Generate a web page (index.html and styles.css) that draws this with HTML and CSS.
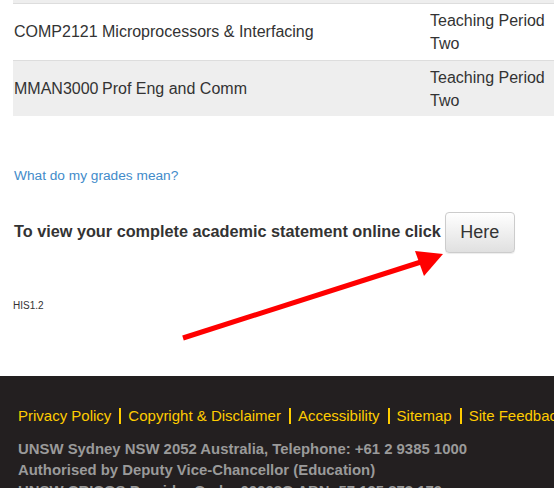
FILE: index.html
```html
<!DOCTYPE html>
<html>
<head>
<meta charset="utf-8">
<link rel="stylesheet" href="styles.css">
</head>
<body>
<div class="page">
  <table class="results">
    <colgroup><col class="c-code"><col class="c-name"><col class="c-period"></colgroup>
    <tr class="stub"><td></td><td></td><td></td></tr>
    <tr class="odd">
      <td>COMP2121</td><td>Microprocessors &amp; Interfacing</td><td>Teaching Period Two</td>
    </tr>
    <tr class="even">
      <td>MMAN3000</td><td>Prof Eng and Comm</td><td>Teaching Period Two</td>
    </tr>
  </table>

  <a class="grades" href="#">What do my grades mean?</a>

  <div class="statement">
    <span class="statement-text">To view your complete academic statement online click</span>
    <button class="btn">Here</button>
  </div>

  <div class="version">HIS1.2</div>

  <svg class="arrow" width="554" height="488" viewBox="0 0 554 488">
    <line x1="183" y1="338" x2="424" y2="261" stroke="#ff0000" stroke-width="5"/>
    <polygon points="443,254 415,251 424,276" fill="#ff0000"/>
  </svg>
</div>

<footer class="footer">
  <nav class="footer-links">
    <a href="#">Privacy Policy</a><span class="sep"></span>
    <a href="#">Copyright &amp; Disclaimer</a><span class="sep"></span>
    <a href="#">Accessibility</a><span class="sep"></span>
    <a href="#">Sitemap</a><span class="sep"></span>
    <a href="#">Site Feedback</a>
  </nav>
  <p class="footer-info">UNSW Sydney NSW 2052 Australia, Telephone: +61 2 9385 1000<br>
  Authorised by Deputy Vice-Chancellor (Education)<br>
  UNSW CRICOS Provider Code: 00098G ABN: 57 195 873 179</p>
</footer>
</body>
</html>
```

FILE: styles.css
```css
html, body {
  margin: 0;
  padding: 0;
  overflow: hidden;
}
body {
  font-family: "Liberation Sans", Arial, Helvetica, sans-serif;
  color: #333333;
  background: #ffffff;
}
.page {
  position: relative;
  padding: 0 0 0 13px;
  height: 376px;
  box-sizing: border-box;
}
.results {
  width: 560px;
  border-collapse: collapse;
  table-layout: fixed;
  font-size: 16px;
  line-height: 22.86px;
}
.c-code { width: 88px; }
.c-name { width: 328px; }
.c-period { width: 144px; }
.results td {
  padding: 6px 1px 4px 1px;
  vertical-align: middle;
  border-top: 1px solid #dddddd;
}
.results td:nth-child(3) { padding-right: 24px; }
.results .stub td {
  height: 3px;
  padding: 0;
  border-top: none;
  background: #eeeeee;
}
.results .odd td { background: #ffffff; }
.results .even td { background: #eeeeee; }
.grades {
  display: block;
  margin: 51px 0 0 1px;
  font-size: 13.7px;
  line-height: 18px;
  color: #428bca;
  text-decoration: none;
}
.statement {
  display: flex;
  align-items: center;
  margin: 27px 0 0 1px;
}
.statement-text {
  font-weight: bold;
  font-size: 16.25px;
  margin-bottom: 3px;
}
.btn {
  margin-left: 4px;
  width: 70px;
  height: 41px;
  padding: 0;
  font-family: "Liberation Sans", Arial, sans-serif;
  font-size: 18px;
  color: #333333;
  border: 1px solid #cccccc;
  border-radius: 4px;
  background: linear-gradient(#ffffff, #e0e0e0);
  box-shadow: inset 0 1px 0 rgba(255,255,255,0.15), 0 1px 1px rgba(0,0,0,0.075);
}
.version {
  margin: 47px 0 0 0;
  font-size: 10px;
  line-height: 12px;
}
.arrow {
  position: absolute;
  left: 0;
  top: 0;
  pointer-events: none;
}
.footer {
  background: #231f20;
  padding: 30px 0 0 18px;
  white-space: nowrap;
}
.footer-links {
  display: flex;
  align-items: center;
  font-size: 15px;
  line-height: 20px;
}
.footer-links > * {
  flex-shrink: 0;
}
.footer-links a {
  color: #ffcc00;
  text-decoration: none;
}
.sep {
  display: inline-block;
  width: 2px;
  height: 16px;
  background: #ffcc00;
  margin: 0 7px 0 8px;
}
.footer-info {
  margin: 13px 0 0 0;
  font-size: 14.9px;
  line-height: 21px;
  font-weight: bold;
  color: #9a9a9a;
}
```
